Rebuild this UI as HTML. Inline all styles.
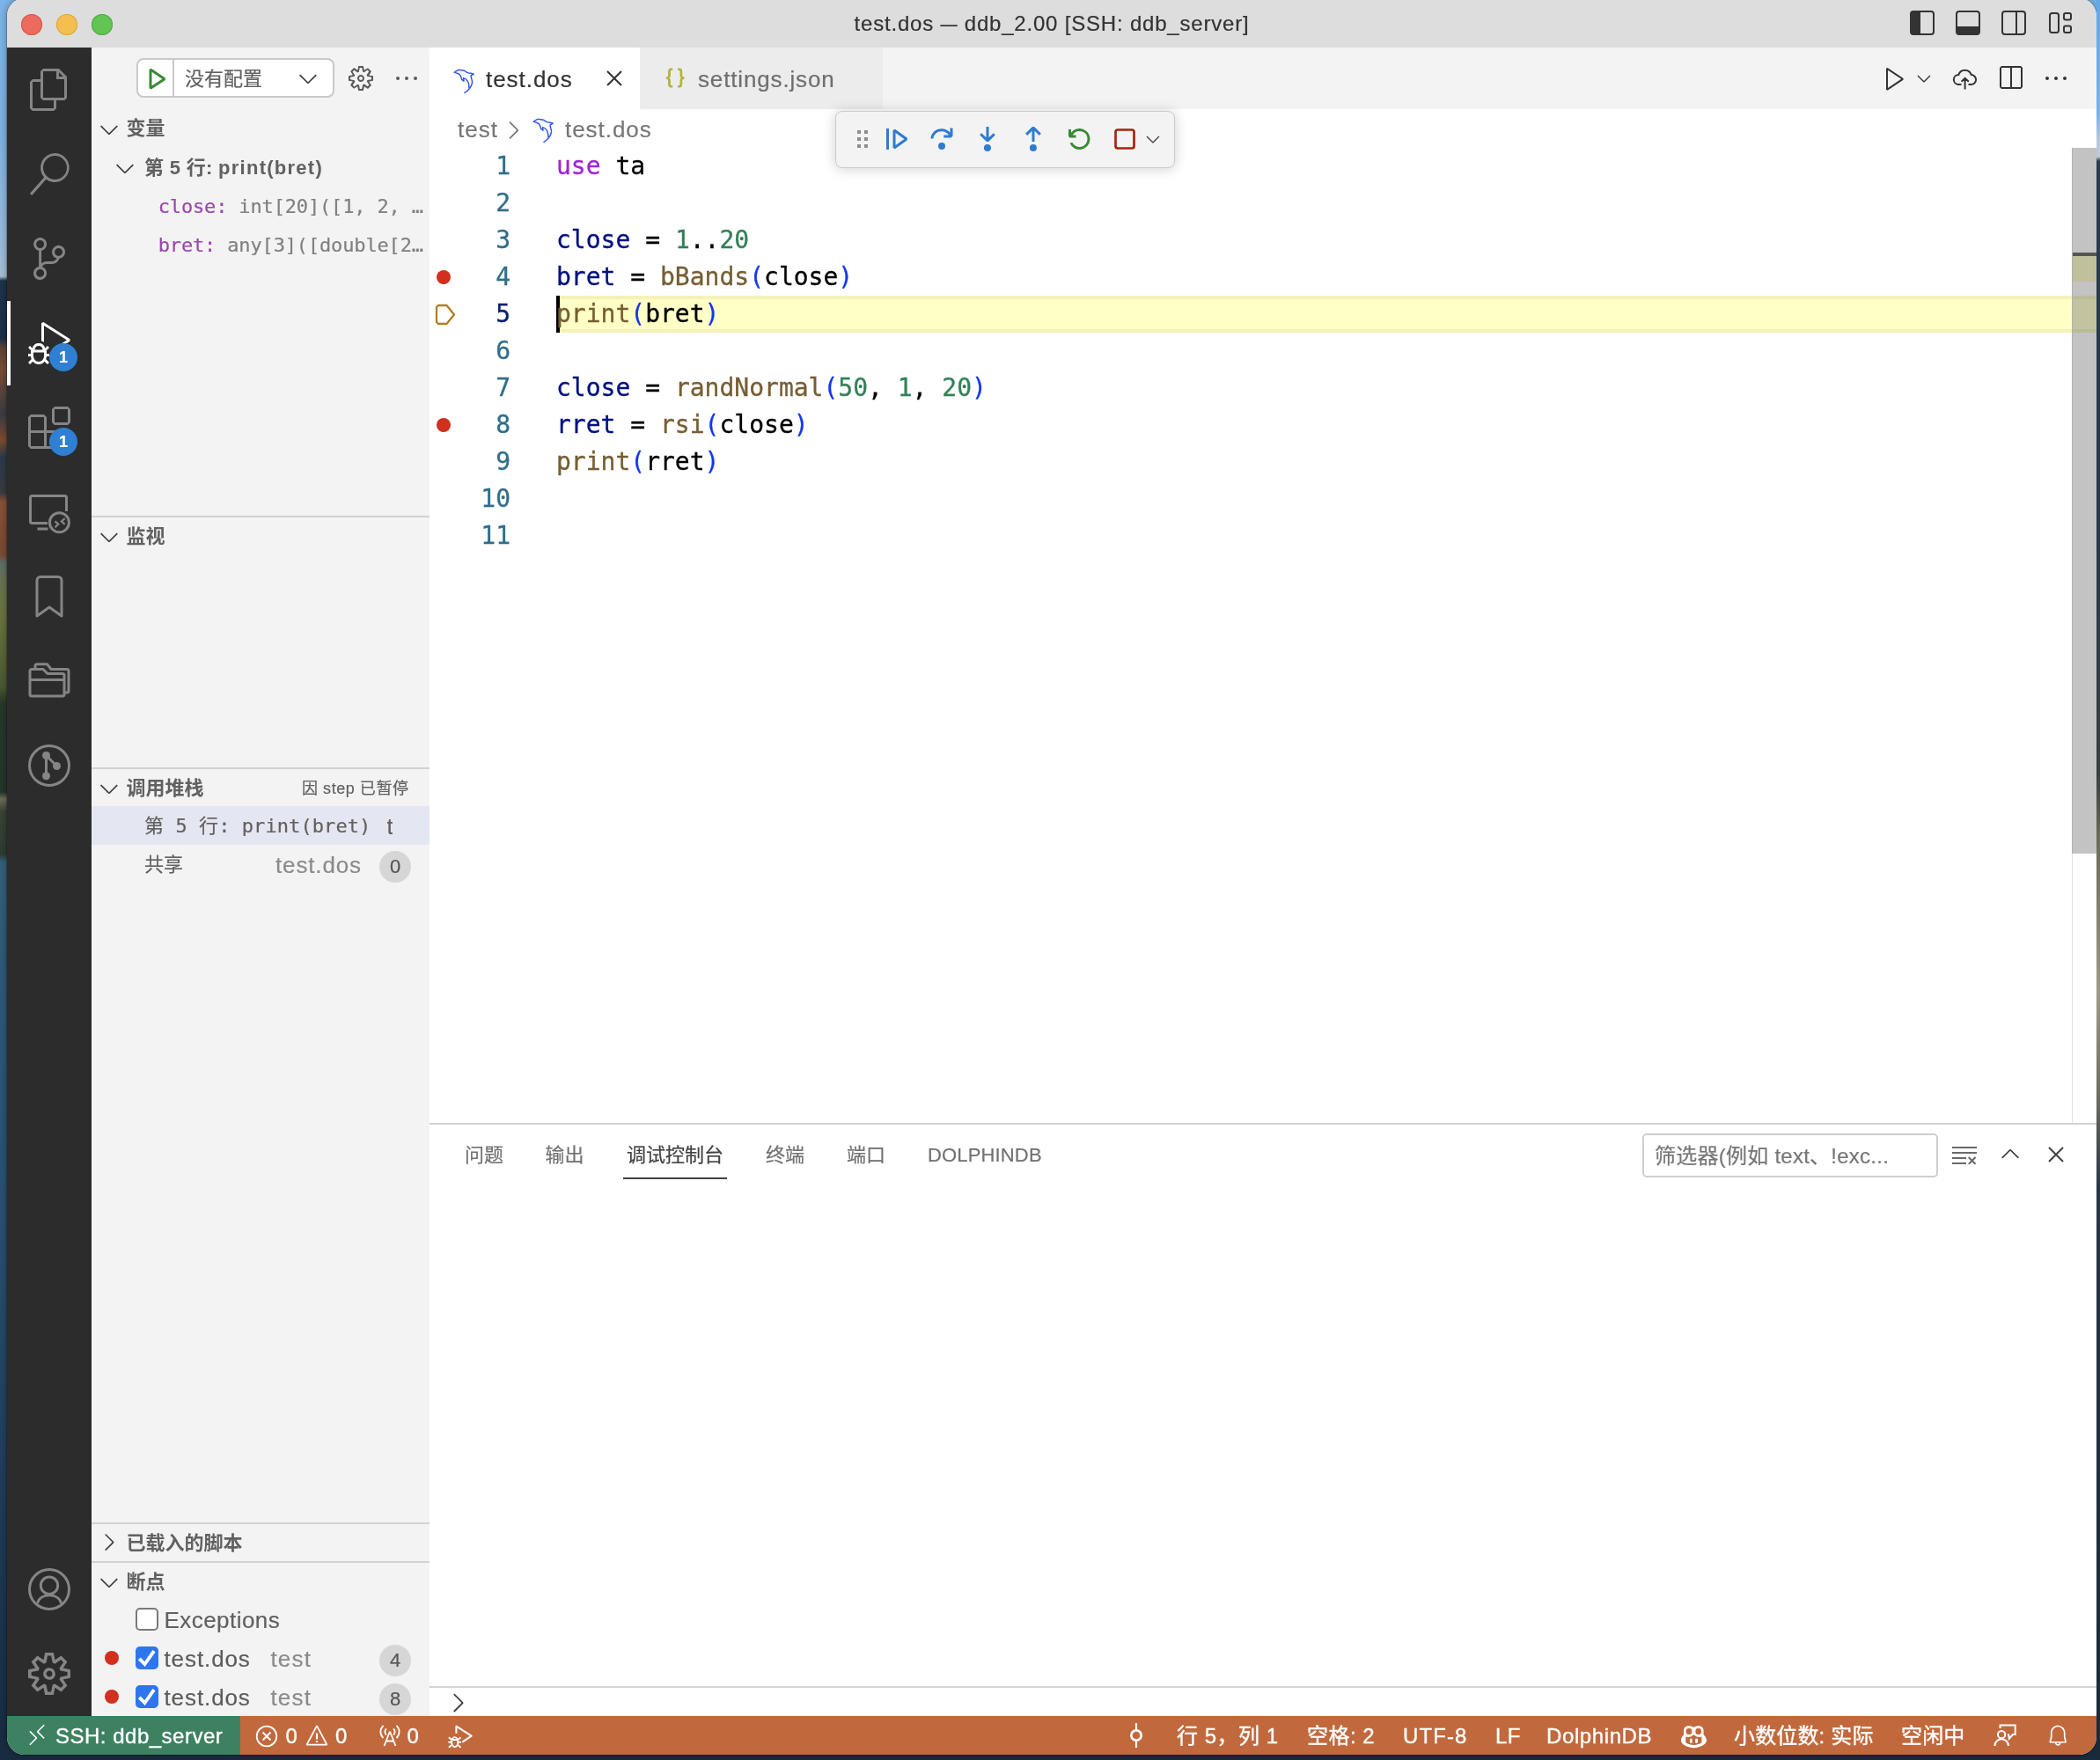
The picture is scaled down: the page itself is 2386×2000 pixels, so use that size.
<!DOCTYPE html>
<html lang="zh-CN">
<head>
<meta charset="utf-8">
<title>test.dos — ddb_2.00 [SSH: ddb_server]</title>
<style>
*{box-sizing:border-box;margin:0;padding:0}
html,body{width:2386px;height:2000px;overflow:hidden}
body{position:relative;font-family:"Liberation Sans","Noto Sans CJK SC",sans-serif;color:#333;
background:linear-gradient(180deg,#7db4e8 0px,#7fb2e2 150px,#9fbddb 290px,#aabfd2 314px,#1e3448 319px,#1c3046 385px,#5a4436 395px,#7a4e34 420px,#3a3c44 470px,#7d4c30 500px,#2a3a4c 520px,#3a3a40 560px,#8a5236 570px,#7a4a34 630px,#5f7068 640px,#6a7450 665px,#6b7440 700px,#4a5a34 780px,#25382a 800px,#22362a 900px,#6e6e5a 908px,#3a4434 922px,#2c3c34 970px,#35607a 980px,#2f5a78 1100px,#2a5070 1400px,#1f3c58 1700px,#182c40 2000px);}
.abs{position:absolute}
.mono{font-family:"DejaVu Sans Mono","Liberation Mono","Noto Sans CJK SC",monospace}
#win{will-change:transform;-webkit-text-stroke:.2px;position:absolute;left:8px;top:-2px;width:2374px;height:1996px;border-radius:20px;overflow:hidden;background:#dddddd;box-shadow:0 0 0 1px rgba(0,0,0,.2),0 0 10px rgba(0,0,0,.35)}
#sh{position:absolute;left:0;top:2px;width:2374px;height:1994px}
#title{position:absolute;left:0;top:0;width:2374px;height:54px;background:#dddddd}
#title .t{position:absolute;left:0;width:2374px;top:0;height:54px;line-height:54px;text-align:center;font-size:24px;letter-spacing:.8px;color:#333}
#title .t i{display:inline-block;font-style:normal;transform:scaleX(.8);margin:0 -2.500px}
.tl{position:absolute;top:16px;width:24px;height:24px;border-radius:50%}
#act{position:absolute;left:0;top:54px;width:96px;height:1896px;background:#2c2c2c}
#side{position:absolute;left:96px;top:54px;width:384px;height:1896px;background:#f3f3f3;color:#616161}
#ed{position:absolute;left:480px;top:54px;width:1894px;height:1896px;background:#fff}
#status{position:absolute;left:0;top:1950px;width:2374px;height:44px;background:linear-gradient(90deg,#3d8161 265px,#c1693d 265px);color:#fff;font-size:24px}
svg{position:absolute;display:block;overflow:visible}
.ic{fill:#858585}
.hdr{-webkit-text-stroke:0;position:absolute;left:0;width:384px;height:44px;font-weight:bold;font-size:22px;color:#616161}
.hdr.b{border-top:2px solid #d2d2d2}
.hdr span{position:absolute;left:39.500px;top:0;line-height:44px;white-space:nowrap}
.hdr.b span{top:-.300px}
.row{position:absolute;left:0;width:384px;height:44px;line-height:46px;white-space:nowrap;overflow:hidden}
.badge{position:absolute;width:36px;height:36px;border-radius:18px;background:#d6d6d6;color:#555;font-size:22px;line-height:36px;text-align:center}
.cb{position:absolute;left:50px;width:26px;height:26px;border-radius:5px;overflow:hidden}
.cb.off{border:2px solid #7a7a7a;background:#fff}
.cb.on{background:#2f76ee}
.bp{position:absolute;width:16px;height:16px;border-radius:50%;background:#d1301f}
.ln{position:absolute;left:0;width:92px;text-align:right;height:42px;line-height:42px;font-size:28px;color:#306e8a;-webkit-text-stroke:.3px}
.cl{position:absolute;left:144px;height:42px;line-height:42px;font-size:28px;white-space:pre;color:#000;-webkit-text-stroke:.3px}
.kw{color:#a026d4}.v{color:#001080}.n{color:#338057}.f{color:#755e32}.p{color:#1036f5}
.ptab{position:absolute;top:1222px;height:70px;line-height:74px;font-size:22px;color:#717171;white-space:nowrap}
.sb{position:absolute;top:0;height:44px;line-height:45.400px;white-space:nowrap;letter-spacing:.5px;-webkit-text-stroke:.35px #fff}
</style>
</head>
<body>
<div id="win"><div id="sh">
<!-- TITLE BAR -->
<div id="title">
<div class="tl" style="left:16px;background:#ec6a5e;box-shadow:inset 0 0 0 1px #d5574b"></div>
<div class="tl" style="left:56px;background:#f4bf4f;box-shadow:inset 0 0 0 1px #d9a53a"></div>
<div class="tl" style="left:96px;background:#61c554;box-shadow:inset 0 0 0 1px #4fa842"></div>
<div class="t">test.dos <i>—</i> ddb_2.00 [SSH: ddb_server]</div>
<svg style="left:2162px;top:12px" width="28" height="28" viewBox="0 0 28 28"><rect x="1" y="1" width="26" height="26" rx="3" fill="none" stroke="#333" stroke-width="2"/><path fill="#333" d="M1 4a3 3 0 0 1 3-3h8v26H4a3 3 0 0 1-3-3z"/></svg>
<svg style="left:2214px;top:12px" width="28" height="28" viewBox="0 0 28 28"><rect x="1" y="1" width="26" height="26" rx="3" fill="none" stroke="#333" stroke-width="2"/><path fill="#333" d="M1 18h26v6a3 3 0 0 1-3 3H4a3 3 0 0 1-3-3z"/></svg>
<svg style="left:2266px;top:12px" width="28" height="28" viewBox="0 0 28 28"><rect x="1" y="1" width="26" height="26" rx="3" fill="none" stroke="#333" stroke-width="2"/><path fill="#333" d="M16 1h2v26h-2z"/></svg>
<svg style="left:2320px;top:14px" width="26" height="24" viewBox="0 0 26 24"><rect x="1" y="1" width="10" height="22" rx="2.500" fill="none" stroke="#333" stroke-width="2"/><rect x="17" y="1" width="8" height="7.500" rx="2" fill="none" stroke="#333" stroke-width="2"/><rect x="17" y="15.500" width="8" height="7.500" rx="2" fill="none" stroke="#333" stroke-width="2"/></svg>
</div>
<!-- ACTIVITY BAR -->
<div id="act">
<div class="abs" style="left:0;top:288px;width:4px;height:96px;background:#fff"></div>
<!-- files -->
<svg style="left:24px;top:24px" width="48" height="48" viewBox="0 0 24 24"><path class="ic" d="M17.500 0h-9L7 1.500V6H2.500L1 7.500v15.070L2.500 24h12.070L16 22.570V18h4.700l1.300-1.430V4.500L17.500 0zm0 2.120l2.380 2.380H17.500V2.120zm-3 20.380h-12v-15H7v9.070L8.500 18h6v4.500zm6-6h-12v-15H16V6h4.500v10.500z"/></svg>
<!-- search -->
<svg style="left:24px;top:120px" width="48" height="48" viewBox="0 0 24 24"><path class="ic" d="M15.250 0a8.250 8.250 0 0 0-6.180 13.720L1 22.880l1.120 1.120 8.050-9.120A8.251 8.251 0 1 0 15.250.010V0zm0 15a6.750 6.750 0 1 1 0-13.500 6.750 6.750 0 0 1 0 13.500z"/></svg>
<!-- scm -->
<svg style="left:24px;top:216px" width="48" height="48" viewBox="0 0 24 24"><path class="ic" d="M21.007 8.222A3.738 3.738 0 0 0 15.045 5.200a3.737 3.737 0 0 0 1.156 6.583 2.988 2.988 0 0 1-2.668 1.670h-2.990a4.456 4.456 0 0 0-2.989 1.165V7.400a3.737 3.737 0 1 0-1.494 0v9.117a3.776 3.776 0 1 0 1.816.099 2.990 2.990 0 0 1 2.668-1.667h2.990a4.484 4.484 0 0 0 4.223-3.039 3.736 3.736 0 0 0 3.250-3.687zM4.565 3.738a2.242 2.242 0 1 1 4.484 0 2.242 2.242 0 0 1-4.484 0zm4.484 16.441a2.242 2.242 0 1 1-4.484 0 2.242 2.242 0 0 1 4.484 0zm8.221-9.715a2.242 2.242 0 1 1 0-4.485 2.242 2.242 0 0 1 0 4.485z"/></svg>
<!-- debug -->
<svg style="left:24px;top:312px" width="48" height="48" viewBox="0 0 24 24"><path fill="#fff" d="M10.940 13.500l-1.320 1.320a3.730 3.730 0 0 0-7.240 0L1.060 13.500 0 14.560l1.720 1.720-.220.220V18H0v1.500h1.500v.080c.077.489.214.966.410 1.420L0 22.940 1.060 24l1.650-1.650A4.308 4.308 0 0 0 6 24a4.310 4.310 0 0 0 3.290-1.650L10.940 24 12 22.940 10.090 21c.198-.464.336-.951.410-1.450v-.100H12V18h-1.500v-1.500l-.220-.220L12 14.560l-1.060-1.060zM6 13.500a2.250 2.250 0 0 1 2.250 2.250h-4.500A2.250 2.250 0 0 1 6 13.500zm3 6a3.330 3.330 0 0 1-3 3 3.330 3.330 0 0 1-3-3v-2.250h6v2.250zm14.760-9.900v1.260L13.500 17.370V15.600l8.500-5.370L9 2v9.460a5.070 5.070 0 0 0-1.500-.720V.630L8.640 0l15.120 9.600z"/></svg>
<div class="abs" style="left:48px;top:336px;width:32px;height:32px;border-radius:16px;background:#2f7fd2;color:#fff;font-weight:bold;font-size:18px;line-height:32px;text-align:center">1</div>
<!-- extensions -->
<svg style="left:24px;top:408px" width="48" height="48" viewBox="0 0 24 24"><path class="ic" d="M13.500 1.500L15 0h7.500L24 1.500V9l-1.500 1.500H15L13.500 9V1.500zm1.500 0V9h7.500V1.500H15zM0 15V6l1.500-1.500H9L10.500 6v7.500H18l1.500 1.500v7.500L18 24H1.500L0 22.500V15zm9-1.500V6H1.500v7.500H9zM9 15H1.500v7.500H9V15zm1.500 7.500H18V15h-7.500v7.500z"/></svg>
<div class="abs" style="left:48px;top:432px;width:32px;height:32px;border-radius:16px;background:#2f7fd2;color:#fff;font-weight:bold;font-size:18px;line-height:32px;text-align:center">1</div>
<!-- remote explorer -->
<svg style="left:16px;top:504px" width="56" height="56" viewBox="0 0 56 56"><path fill="none" stroke="#858585" stroke-width="3" d="M30 36.500H12.500a2 2 0 0 1-2-2V7.500a2 2 0 0 1 2-2H49.500a2 2 0 0 1 2 2V23M18.500 43H30.500"/><circle cx="43.400" cy="35.700" r="11" fill="none" stroke="#858585" stroke-width="3"/><path fill="none" stroke="#858585" stroke-width="2.200" d="M38.500 34.400l3.800 3.200-3.800 3.600M49.700 31.100l-3.900 3.300 3.900 3.500"/></svg>
<!-- bookmark -->
<svg style="left:24px;top:600px" width="48" height="48" viewBox="0 0 48 48"><path fill="none" stroke="#858585" stroke-width="3" stroke-linejoin="round" d="M14 1.500H34A4 4 0 0 1 38 5.500V46L24 36 10 46V5.500A4 4 0 0 1 14 1.500z"/></svg>
<!-- folders -->
<svg style="left:24px;top:696px" width="48" height="48" viewBox="0 0 48 48"><path fill="none" stroke="#858585" stroke-width="3" stroke-linejoin="round" d="M4 41a2 2 0 0 1-2-2V12.500a2 2 0 0 1 2-2H17L22 15.500H39a2 2 0 0 1 2 2V39a2 2 0 0 1-2 2zM2 22.500H41M8 9V6.700a2 2 0 0 1 2-2H21.500L26 10.500H44a2 2 0 0 1 2 2V35a2 2 0 0 1-2 2H42"/></svg>
<!-- git graph -->
<svg style="left:24px;top:792px" width="48" height="48" viewBox="0 0 48 48"><circle cx="24" cy="24" r="22.500" fill="none" stroke="#858585" stroke-width="3"/><path stroke="#858585" stroke-width="3" fill="none" d="M20.500 12.500V35.700M20.500 12.500L32.500 24.500"/><circle cx="20.500" cy="12.500" r="4.500" fill="#858585"/><circle cx="20.500" cy="35.700" r="4.500" fill="#858585"/><circle cx="32.500" cy="24.500" r="4.500" fill="#858585"/></svg>
<!-- account -->
<svg style="left:24px;top:1728px" width="48" height="48" viewBox="0 0 48 48"><circle cx="24" cy="24" r="22.500" fill="none" stroke="#858585" stroke-width="3"/><circle cx="24" cy="19.700" r="9.700" fill="none" stroke="#858585" stroke-width="3"/><path fill="none" stroke="#858585" stroke-width="3" d="M10.500 40C12 34 17.500 30.800 24 30.800S36 34 37.500 40"/></svg>
<!-- gear -->
<svg style="left:24px;top:1824px" width="48" height="48" viewBox="0 0 24 24"><path class="ic" d="M19.850 8.750l4.150.830v4.840l-4.150.830 2.350 3.520-3.430 3.430-3.520-2.350-.830 4.150H9.580l-.830-4.150-3.520 2.350-3.430-3.430 2.350-3.520L0 14.420V9.580l4.150-.830L1.800 5.230 5.230 1.800l3.520 2.350L9.580 0h4.840l.830 4.150 3.520-2.350 3.430 3.430-2.350 3.520zm-1.570 5.070l4-.810v-2l-4-.810-.540-1.300 2.290-3.430-1.430-1.430-3.430 2.290-1.300-.540-.810-4h-2l-.810 4-1.300.540-3.430-2.290-1.430 1.430L6.380 8.900l-.540 1.300-4 .810v2l4 .810.540 1.300-2.290 3.430 1.430 1.430 3.430-2.290 1.300.540.810 4h2l.810-4 1.300-.540 3.430 2.290 1.430-1.430-2.290-3.430.540-1.300zm-8.186-4.672A3.430 3.430 0 0 1 12 8.570 3.440 3.440 0 0 1 15.430 12a3.430 3.430 0 1 1-5.336-2.852zm.956 4.274c.281.188.612.288.950.288A1.700 1.700 0 0 0 13.710 12a1.710 1.710 0 1 0-2.660 1.422z"/></svg>
</div>
<!-- SIDEBAR -->
<div id="side">
<div class="abs" style="left:51px;top:12px;width:225px;height:45px;border:2px solid #c9c9c9;border-radius:8px;background:#fff"></div>
<div class="abs" style="left:92px;top:13px;width:2px;height:43px;background:#c9c9c9"></div>
<svg style="left:56.500px;top:19px" width="32" height="32" viewBox="0 0 16 16"><path fill="#388a34" d="M4.250 3l1.166-.624 8 5.333v1.248l-8 5.334-1.166-.624V3zm1.500 1.401v7.864l5.898-3.932L5.750 4.401z"/></svg>
<div class="abs" style="left:106px;top:13px;height:45px;line-height:46.500px;font-size:22px;color:#616161;white-space:nowrap">没有配置</div>
<svg style="left:229.500px;top:18.600px" width="32" height="32" viewBox="0 0 16 16"><path fill="#424242" d="M7.976 10.072l4.357-4.357.620.618L8.284 11h-.618L3 6.333l.619-.618 4.357 4.357z"/></svg>
<svg style="left:289.500px;top:19px" width="32" height="32" viewBox="0 0 16 16"><path fill="#5a5a5a" d="M9.100 4.400L8.600 2H7.400l-.500 2.400-.700.300-2-1.300-.900.800 1.300 2-.200.700-2.400.500v1.200l2.400.500.300.800-1.300 2 .800.800 2-1.300.800.300.400 2.300h1.200l.500-2.400.800-.300 2 1.300.800-.800-1.300-2 .300-.800 2.300-.400V7.400l-2.400-.500-.300-.800 1.300-2-.800-.800-2 1.300-.700-.200zM9.400 1l.500 2.400L12 2.100l2 2-1.400 2.100 2.400.400v2.800l-2.400.500L14 12l-2 2-2.100-1.400-.500 2.400H6.600l-.500-2.400L4 13.900l-2-2 1.400-2.100L1 9.400V6.600l2.400-.500L2.100 4l2-2 2.100 1.400.400-2.400h2.800zm.600 7c0 1.100-.900 2-2 2s-2-.900-2-2 .900-2 2-2 2 .900 2 2zM8 9c.600 0 1-.400 1-1s-.400-1-1-1-1 .400-1 1 .400 1 1 1z"/></svg>
<svg style="left:342px;top:19px" width="32" height="32" viewBox="0 0 16 16"><path fill="#5a5a5a" d="M4 8a1 1 0 1 1-2 0 1 1 0 0 1 2 0zm5 0a1 1 0 1 1-2 0 1 1 0 0 1 2 0zm5 0a1 1 0 1 1-2 0 1 1 0 0 1 2 0z"/></svg>

<!-- 变量 -->
<div class="hdr" style="top:70px"><svg style="left:3.500px;top:6.500px" width="32" height="32" viewBox="0 0 16 16"><path fill="#424242" d="M7.976 10.072l4.357-4.357.620.618L8.284 11h-.618L3 6.333l.619-.618 4.357 4.357z"/></svg><span>变量</span></div>
<div class="row" style="top:114px"><svg style="left:21.500px;top:6.500px" width="32" height="32" viewBox="0 0 16 16"><path fill="#424242" d="M7.976 10.072l4.357-4.357.620.618L8.284 11h-.618L3 6.333l.619-.618 4.357 4.357z"/></svg><span class="abs" style="left:60px;top:0;font-size:22px;font-weight:bold;-webkit-text-stroke:0;color:#616161;letter-spacing:.3px">第 5 行: <span style="letter-spacing:1.270px">print(bret)</span></span></div>
<div class="row mono" style="top:158px;font-size:22px"><span class="abs" style="left:75.700px;top:0;color:#808080;letter-spacing:-.15px"><span style="color:#9b46b0">close:</span> int[20]([1, 2, …</span></div>
<div class="row mono" style="top:202px;font-size:22px"><span class="abs" style="left:75.700px;top:0;color:#808080;letter-spacing:-.15px"><span style="color:#9b46b0">bret:</span> any[3]([double[2…</span></div>

<!-- 监视 -->
<div class="hdr b" style="top:532px"><svg style="left:3.500px;top:5.500px" width="32" height="32" viewBox="0 0 16 16"><path fill="#424242" d="M7.976 10.072l4.357-4.357.620.618L8.284 11h-.618L3 6.333l.619-.618 4.357 4.357z"/></svg><span>监视</span></div>

<!-- 调用堆栈 -->
<div class="hdr b" style="top:818px"><svg style="left:3.500px;top:5.500px" width="32" height="32" viewBox="0 0 16 16"><path fill="#424242" d="M7.976 10.072l4.357-4.357.620.618L8.284 11h-.618L3 6.333l.619-.618 4.357 4.357z"/></svg><span>调用堆栈</span>
<span style="left:239px;font-weight:normal;font-size:18px;letter-spacing:.55px;-webkit-text-stroke:.2px">因 step 已暂停</span></div>
<div class="row mono" style="top:862px;background:#e4e6f1;font-size:22px"><span class="abs" style="left:60px;top:.300px;color:#616161;letter-spacing:.08px">第 5 行: print(bret)</span><span class="abs" style="left:335.500px;top:0;width:6.500px;overflow:hidden;color:#616161;font-family:'Liberation Sans',sans-serif;font-size:26px">t</span></div>
<div class="row" style="top:906px"><span class="abs" style="left:60px;top:0;font-size:22px;color:#616161">共享</span><span class="abs" style="left:209px;top:0;font-size:26px;color:#8b8b8b;letter-spacing:.85px">test.dos</span><div class="badge" style="left:327px;top:7px">0</div></div>

<!-- 已载入的脚本 -->
<div class="hdr b" style="top:1676px"><svg style="left:4px;top:5px" width="31" height="31" viewBox="0 0 16 16"><path fill="#424242" d="M10.072 8.024L5.715 3.667l.618-.620L11 7.716v.618L6.333 13l-.618-.619 4.357-4.357z"/></svg><span>已载入的脚本</span></div>
<!-- 断点 -->
<div class="hdr b" style="top:1720px"><svg style="left:3.500px;top:5.500px" width="32" height="32" viewBox="0 0 16 16"><path fill="#424242" d="M7.976 10.072l4.357-4.357.620.618L8.284 11h-.618L3 6.333l.619-.618 4.357 4.357z"/></svg><span>断点</span></div>
<div class="row" style="top:1764px"><div class="cb off" style="top:9px"></div><span class="abs" style="left:82.500px;top:0;font-size:26px;color:#616161;letter-spacing:.45px">Exceptions</span></div>
<div class="row" style="top:1808px"><div class="bp" style="left:15px;top:14px"></div><div class="cb on" style="top:9px"><svg style="left:2px;top:2px" width="22" height="22" viewBox="0 0 22 22"><path fill="none" stroke="#fff" stroke-width="3.800" d="M2.300 11.800L8.500 18 19 3.200"/></svg></div><span class="abs" style="left:82.500px;top:0;font-size:26px;color:#5c5c5c;letter-spacing:.9px">test.dos</span><span class="abs" style="left:203.500px;top:0;font-size:26px;color:#8b8b8b;letter-spacing:1.150px">test</span><div class="badge" style="left:327px;top:7px">4</div></div>
<div class="row" style="top:1852px"><div class="bp" style="left:15px;top:14px"></div><div class="cb on" style="top:9px"><svg style="left:2px;top:2px" width="22" height="22" viewBox="0 0 22 22"><path fill="none" stroke="#fff" stroke-width="3.800" d="M2.300 11.800L8.500 18 19 3.200"/></svg></div><span class="abs" style="left:82.500px;top:0;font-size:26px;color:#5c5c5c;letter-spacing:.9px">test.dos</span><span class="abs" style="left:203.500px;top:0;font-size:26px;color:#8b8b8b;letter-spacing:1.150px">test</span><div class="badge" style="left:327px;top:7px">8</div></div>
</div>
<!-- EDITOR -->
<div id="ed">
<div class="abs" style="left:0;top:0;width:1894px;height:70px;background:#f3f3f3"></div>
<div class="abs" style="left:0;top:0;width:239px;height:70px;background:#fff"></div>
<div class="abs" style="left:239px;top:0;width:276px;height:70px;background:#ececec"></div>
<svg class="dol" style="left:27px;top:25px" width="25" height="28" viewBox="0 0 25 28"><path fill="none" stroke="#3358e6" stroke-width="1.500" stroke-linejoin="round" stroke-linecap="round" d="M1.200 3.200C3 2 4.500.800 6 .500 9 0 11 1 13.400 1.700 14.500 2.800 15.500 3.300 16.300 3.600 18 4.300 19.500 4.300 21 4.400 22 4.400 22.800 4.900 23.200 5.400 22 6 20.800 6.200 20.100 6.800 20 8.500 20.600 10 21 11.300 21.400 12.500 21.600 13.800 21.500 14.900 21.300 16.500 20.800 18 20.100 19.200 19.300 20.600 18.400 21.800 17.400 22.700 16 24.200 14.500 25.400 12.900 26.300M17.900 20.800C18 19 17.900 17.500 17.400 16 17.100 15 16.800 14 16.300 13.200 15.700 12.300 15 11.600 14.300 11 13.500 10.300 12.500 9.900 11.500 9.600L12 13.200 9.600 11.300C9.200 10 8.900 8.800 8.600 7.700 8.100 6.700 7.500 5.900 6.700 5.300 5.700 4.500 4.500 4.100 3.400 3.900L1.200 3.200"/></svg>
<div class="abs" style="left:64px;top:0;height:70px;line-height:72.500px;font-size:26px;color:#333;letter-spacing:.95px;white-space:nowrap">test.dos</div>
<svg style="left:194px;top:19px" width="32" height="32" viewBox="0 0 16 16"><path fill="#333" d="M8 8.707l3.646 3.647.708-.707L8.707 8l3.647-3.646-.707-.708L8 7.293 4.354 3.646l-.707.708L7.293 8l-3.646 3.646.707.708L8 8.707z"/></svg>
<div class="abs" style="left:268.900px;top:0;height:70px;line-height:67.500px;font-size:21.500px;color:#b3b240;letter-spacing:6.300px;-webkit-text-stroke:.9px #b3b240;white-space:nowrap">{}</div>
<div class="abs" style="left:305px;top:0;height:70px;line-height:72px;font-size:26px;color:#6f6f6f;letter-spacing:.85px;white-space:nowrap">settings.json</div>
<!-- editor actions -->
<svg style="left:1649px;top:18.600px" width="32" height="32" viewBox="0 0 16 16"><path fill="#333" d="M3.780 2L3 2.410v12l.780.420 9-6V8l-9-6zM4 13.480V3.350l7.600 5.070L4 13.480z"/></svg>
<svg style="left:1686px;top:23.400px" width="24" height="24" viewBox="0 0 16 16"><path fill="#333" d="M7.976 10.072l4.357-4.357.620.618L8.284 11h-.618L3 6.333l.619-.618 4.357 4.357z"/></svg>
<svg style="left:1728px;top:19px" width="32" height="32" viewBox="0 0 32 32"><path fill="none" stroke="#333" stroke-width="2" d="M12.500 23H8.500A5.500 5.500 0 0 1 9.300 12.060A7.500 7.500 0 0 1 23.700 12A5.500 5.500 0 0 1 23.500 23H20.500M16.600 28.500V15.800M12.600 19.800L16.600 15.800 20.800 19.800"/></svg>
<svg style="left:1780px;top:19px" width="32" height="32" viewBox="0 0 16 16"><path fill="#333" d="M14 1H3L2 2v11l1 1h11l1-1V2l-1-1zM8 13H3V2h5v11zm6 0H9V2h5v11z"/></svg>
<svg style="left:1832px;top:18.800px" width="32" height="32" viewBox="0 0 16 16"><path fill="#333" d="M4 8a1 1 0 1 1-2 0 1 1 0 0 1 2 0zm5 0a1 1 0 1 1-2 0 1 1 0 0 1 2 0zm5 0a1 1 0 1 1-2 0 1 1 0 0 1 2 0z"/></svg>
<!-- breadcrumb -->
<div class="abs" style="left:32px;top:70px;height:44px;line-height:46px;font-size:26px;color:#777;letter-spacing:1px;white-space:nowrap">test</div>
<svg style="left:78.600px;top:77.500px" width="32" height="32" viewBox="0 0 16 16"><path fill="#777" d="M10.072 8.024L5.715 3.667l.618-.620L11 7.716v.618L6.333 13l-.618-.619 4.357-4.357z"/></svg>
<svg class="dol" style="left:117px;top:81px" width="25" height="28" viewBox="0 0 25 28"><path fill="none" stroke="#3358e6" stroke-width="1.500" stroke-linejoin="round" stroke-linecap="round" d="M1.200 3.200C3 2 4.500.800 6 .500 9 0 11 1 13.400 1.700 14.500 2.800 15.500 3.300 16.300 3.600 18 4.300 19.500 4.300 21 4.400 22 4.400 22.800 4.900 23.200 5.400 22 6 20.800 6.200 20.100 6.800 20 8.500 20.600 10 21 11.300 21.400 12.500 21.600 13.800 21.500 14.900 21.300 16.500 20.800 18 20.100 19.200 19.300 20.600 18.400 21.800 17.400 22.700 16 24.200 14.500 25.400 12.900 26.300M17.900 20.800C18 19 17.900 17.500 17.400 16 17.100 15 16.800 14 16.300 13.200 15.700 12.300 15 11.600 14.300 11 13.500 10.300 12.500 9.900 11.500 9.600L12 13.200 9.600 11.300C9.200 10 8.900 8.800 8.600 7.700 8.100 6.700 7.500 5.900 6.700 5.300 5.700 4.500 4.500 4.100 3.400 3.900L1.200 3.200"/></svg>
<div class="abs" style="left:154px;top:70px;height:44px;line-height:46px;font-size:26px;color:#777;letter-spacing:.95px;white-space:nowrap">test.dos</div>
<!-- lines -->
<div class="abs" style="left:144px;top:282px;width:1750px;height:42px;background:#ffffc6;border-top:4px solid #f4f2b8;border-bottom:4px solid #f4f2b8"></div>
<div class="abs" style="left:143.700px;top:282px;width:4px;height:42px;background:#000"></div>
<div class="mono">
<div class="ln" style="top:114px">1</div><div class="cl" style="top:114px"><span class="kw">use</span> ta</div>
<div class="ln" style="top:156px">2</div>
<div class="ln" style="top:198px">3</div><div class="cl" style="top:198px"><span class="v">close</span> = <span class="n">1</span>..<span class="n">20</span></div>
<div class="ln" style="top:240px">4</div><div class="cl" style="top:240px"><span class="v">bret</span> = <span class="f">bBands</span><span class="p">(</span>close<span class="p">)</span></div>
<div class="ln" style="top:282px;color:#0b216f">5</div><div class="cl" style="top:282px"><span class="f">print</span><span class="p">(</span>bret<span class="p">)</span></div>
<div class="ln" style="top:324px">6</div>
<div class="ln" style="top:366px">7</div><div class="cl" style="top:366px"><span class="v">close</span> = <span class="f">randNormal</span><span class="p">(</span><span class="n">50</span>, <span class="n">1</span>, <span class="n">20</span><span class="p">)</span></div>
<div class="ln" style="top:408px">8</div><div class="cl" style="top:408px"><span class="v">rret</span> = <span class="f">rsi</span><span class="p">(</span>close<span class="p">)</span></div>
<div class="ln" style="top:450px">9</div><div class="cl" style="top:450px"><span class="f">print</span><span class="p">(</span>rret<span class="p">)</span></div>
<div class="ln" style="top:492px">10</div>
<div class="ln" style="top:534px">11</div>
</div>
<div class="bp" style="left:8px;top:253px"></div>
<div class="bp" style="left:8px;top:421px"></div>
<svg style="left:6px;top:290.500px" width="24" height="25" viewBox="0 0 24 25"><path fill="none" stroke="#b08020" stroke-width="2.300" stroke-linejoin="round" d="M4 2H13.500L22 12.500 13.500 23H4L2 21V4z"/></svg>
<!-- scrollbar -->
<div class="abs" style="left:1866px;top:114px;width:1px;height:1108px;background:#e2e2e2"></div>
<div class="abs" style="left:1866px;top:114px;width:28px;height:802px;background:rgba(100,100,100,.39)"></div>
<div class="abs" style="left:1867px;top:233px;width:27px;height:4px;background:#56564f"></div>
<div class="abs" style="left:1867px;top:237px;width:27px;height:29px;background:#c0c09c"></div>
<!-- debug toolbar -->
<div class="abs" style="left:461.400px;top:71.600px;width:385.600px;height:65px;background:#f3f3f3;border:1px solid #cbcbcb;border-radius:8px;box-shadow:0 1px 14px 1px rgba(0,0,0,.17)"></div>
<svg style="left:486px;top:94px" width="12" height="20" viewBox="0 0 12 20"><path fill="#8e8e8e" d="M0 0h4v4H0zM8 0h4v4H8zM0 8h4v4H0zM8 8h4v4H8zM0 16h4v4H0zM8 16h4v4H8z"/></svg>
<svg style="left:514px;top:88px" width="32" height="32" viewBox="0 0 16 16"><path fill="#2f7bd0" d="M2.500 2H4v12H2.500V2zm4.936.390L6.250 3v10l1.186.610 7-5V7.390l-7-5zM12.710 8l-4.960 3.543V4.457L12.710 8z"/></svg>
<svg style="left:566px;top:88px" width="32" height="32" viewBox="0 0 16 16"><path fill="#2f7bd0" d="M14.250 5.750v-4h-1.500v2.542c-1.145-1.359-2.911-2.209-4.840-2.209-3.177 0-5.920 2.307-6.160 5.398l-.020.269h1.501l.022-.226c.212-2.195 2.202-3.940 4.656-3.940 1.736 0 3.244.875 4.050 2.166h-2.830v1.500h4.163l.962-.975V5.750h-.004zM8 14a2 2 0 1 0 0-4 2 2 0 0 0 0 4z"/></svg>
<svg style="left:618px;top:88.400px" width="32" height="32" viewBox="0 0 16 16"><path fill="#2f7bd0" d="M8 9.532h.542l3.905-3.905-1.061-1.060-2.637 2.610V1H7.251v6.177l-2.637-2.610-1.061 1.060 3.905 3.905H8zm1.956 3.481a2 2 0 1 1-4 0 2 2 0 0 1 4 0z"/></svg>
<svg style="left:670px;top:88.400px" width="32" height="32" viewBox="0 0 16 16"><path fill="#2f7bd0" d="M8 1h-.542L3.553 4.905l1.061 1.060 2.637-2.610v6.177h1.498V3.355l2.637 2.610 1.061-1.060L8.542 1H8zm1.956 12.013a2 2 0 1 1-4 0 2 2 0 0 1 4 0z"/></svg>
<svg style="left:722px;top:88px" width="32" height="32" viewBox="0 0 16 16"><path fill="#388a34" d="M12.750 8a4.500 4.500 0 0 1-8.610 1.834l-1.391.565A6.001 6.001 0 0 0 14.250 8 6 6 0 0 0 3.500 4.334V2.500H2v4l.750.750h3.500v-1.500H4.352A4.500 4.500 0 0 1 12.750 8z"/></svg>
<svg style="left:774.400px;top:88px" width="32" height="32" viewBox="0 0 32 32"><rect x="5.500" y="5.500" width="21" height="21" rx="2.500" fill="none" stroke="#a1260d" stroke-width="2.700"/></svg>
<svg style="left:809.900px;top:92.400px" width="24" height="24" viewBox="0 0 16 16"><path fill="#424242" d="M7.976 10.072l4.357-4.357.620.618L8.284 11h-.618L3 6.333l.619-.618 4.357 4.357z"/></svg>

<!-- PANEL -->
<div class="abs" style="left:0;top:1222px;width:1894px;height:2px;background:#d3d3d3"></div>
<div class="ptab" style="left:40px">问题</div>
<div class="ptab" style="left:131.500px">输出</div>
<div class="ptab" style="left:224px;color:#424242">调试控制台</div>
<div class="abs" style="left:219.800px;top:1284px;width:118.200px;height:2px;background:#424242"></div>
<div class="ptab" style="left:382px">终端</div>
<div class="ptab" style="left:474px">端口</div>
<div class="ptab" style="left:566px;letter-spacing:.15px">DOLPHINDB</div>
<div class="abs" style="left:1377.500px;top:1233.600px;width:336px;height:50.700px;border:2px solid #cecece;border-radius:5px;background:#fff"></div>
<div class="abs" style="left:1392px;top:1234.600px;height:48.700px;line-height:50px;font-size:24px;color:#767676;white-space:nowrap;letter-spacing:.25px">筛选器(例如 text、!exc...</div>
<svg style="left:1728px;top:1243px" width="32" height="32" viewBox="0 0 16 16"><path fill="#6a6a6a" d="M10 12.600l.700.700 1.600-1.600 1.600 1.600.800-.700L13 11l1.700-1.600-.800-.800-1.600 1.700-1.600-1.700-.700.800 1.600 1.600-1.600 1.600zM1 4h14V3H1v1zm0 3h14V6H1v1zm8 2.500V9H1v1h8v-.500zM9 13v-1H1v1h8z"/></svg>
<svg style="left:1780px;top:1241.500px" width="32" height="32" viewBox="0 0 16 16"><path fill="#424242" d="M8.024 5.928l-4.357 4.357-.620-.618L7.716 5h.618L13 9.667l-.619.618-4.357-4.357z"/></svg>
<svg style="left:1832px;top:1242.400px" width="32" height="32" viewBox="0 0 16 16"><path fill="#424242" d="M8 8.707l3.646 3.647.708-.707L8.707 8l3.647-3.646-.707-.708L8 7.293 4.354 3.646l-.707.708L7.293 8l-3.646 3.646.707.708L8 8.707z"/></svg>
<div class="abs" style="left:0;top:1862px;width:1894px;height:2px;background:#d3d3d3"></div>
<svg style="left:15.200px;top:1864px" width="34" height="34" viewBox="0 0 16 16"><path fill="#424242" d="M10.072 8.024L5.715 3.667l.618-.620L11 7.716v.618L6.333 13l-.618-.619 4.357-4.357z"/></svg>
</div>
<!-- STATUS BAR -->
<div id="status">
<svg style="left:19.900px;top:8.300px" width="28.200" height="28.200" viewBox="0 0 16 16"><path fill="#fff" d="M12.904 9.570L8.928 5.596l3.976-3.976-.619-.620L8 5.286v.619l4.285 4.285.620-.618zM3 5.620l4.072 4.070L3 13.763l.619.618L8 10v-.619L3.619 5 3 5.620z"/></svg>
<div class="sb" style="left:55px;">SSH: ddb_server</div>
<svg style="left:281.250px;top:8.700px" width="28" height="28" viewBox="0 0 28 28"><circle cx="14" cy="14" r="11.300" fill="none" stroke="#fff" stroke-width="1.800"/><path stroke="#fff" stroke-width="1.800" fill="none" d="M9.500 9.500l9 9M18.500 9.500l-9 9"/></svg>
<div class="sb" style="left:316.500px">0</div>
<svg style="left:338px;top:8.700px" width="28" height="28" viewBox="0 0 16 16"><path fill="#fff" d="M7.560 1h.880l6.540 12.260-.440.740H1.440L1 13.260 7.560 1zM8 2.280L2.280 13H13.700L8 2.280zM8.625 12v-1h-1.250v1h1.250zm-1.250-2V6h1.250v4h-1.250z"/></svg>
<div class="sb" style="left:373px">0</div>
<svg style="left:423px;top:8px" width="24" height="28" viewBox="0 0 24 28"><path fill="none" stroke="#fff" stroke-width="1.800" d="M12 9.500L5.500 26M12 9.500L18.500 26M8 20.500H16M8 6.500A4.500 4.500 0 0 0 8 13.500M16 6.500A4.500 4.500 0 0 1 16 13.500M4.500 3A9.500 9.500 0 0 0 4.500 17M19.500 3A9.500 9.500 0 0 1 19.500 17"/></svg>
<div class="sb" style="left:454.500px">0</div>
<svg style="left:500px;top:8px" width="30" height="30" viewBox="0 0 30 30"><path fill="none" stroke="#fff" stroke-width="2" stroke-linejoin="round" d="M10.400 11.700V3.700L27.700 14.600 17.300 21.700"/><ellipse cx="8.700" cy="21.600" rx="3.500" ry="5.500" fill="none" stroke="#fff" stroke-width="1.900"/><path fill="none" stroke="#fff" stroke-width="1.900" d="M5.200 19h7M1.900 16.300l3 2.400M1.400 21.800h3.800M1.900 27.700l3.200-2.700M15.500 16.300l-3 2.400M16 21.800h-3.800M15.500 27.700l-3.200-2.700"/></svg>
<svg style="left:1275.100px;top:8px" width="16" height="28" viewBox="0 0 16 28"><circle cx="8" cy="14" r="5.700" fill="none" stroke="#fff" stroke-width="2.700"/><path stroke="#fff" stroke-width="2.100" d="M8 .100V8.500M8 19.500V28.100"/></svg>
<div class="sb" style="left:1329px">行 5，列 1</div>
<div class="sb" style="left:1477px">空格: 2</div>
<div class="sb" style="left:1586px;letter-spacing:1.100px">UTF-8</div>
<div class="sb" style="left:1691px">LF</div>
<div class="sb" style="left:1749px;letter-spacing:.6px">DolphinDB</div>
<svg style="left:1901px;top:11px" width="31" height="26" viewBox="0 0 31 26"><path fill="#fff" d="M9.500.200C12 .200 14 .800 15.300 2 16.600.800 18.600.200 21.100.200 24.500.200 26.600 2.500 26.600 6V10.500C28.800 12 30 14.500 30 17 30 19 28 21.300 25 22.800 22 24.400 18.500 25.300 15.400 25.300 12.300 25.300 8.800 24.400 5.800 22.800 2.800 21.300.900 19 .900 17 .900 14.500 2 12 4 10.500V6C4 2.500 6.100.200 9.500.200z"/><rect x="6.600" y="3" width="6.800" height="7.100" rx="3" fill="#c1693d"/><rect x="17.400" y="3" width="6.600" height="7.100" rx="3" fill="#c1693d"/><path fill="#c1693d" d="M6.300 12.500C9.500 13.600 13.200 12.600 15.400 10.300 17.600 12.600 21.300 13.600 24.400 12.500V19.200C21.800 20.900 18.600 21.900 15.400 21.900 12.200 21.900 9 20.900 6.300 19.200z"/><rect x="10.900" y="14.400" width="2.800" height="5.500" rx="1.400" fill="#fff"/><rect x="17.100" y="14.400" width="2.900" height="5.500" rx="1.400" fill="#fff"/></svg>
<div class="sb" style="left:1962px;letter-spacing:.15px">小数位数: 实际</div>
<div class="sb" style="left:2152px;letter-spacing:.15px">空闲中</div>
<svg style="left:2256px;top:8px" width="28" height="28" viewBox="0 0 28 28"><path fill="none" stroke="#fff" stroke-width="2" d="M8.600 6V2.400H25.700V13.100H22.900L18.900 17.700 18 13.300H17.100"/><circle cx="10.100" cy="13.100" r="4.200" fill="none" stroke="#fff" stroke-width="2"/><path fill="none" stroke="#fff" stroke-width="2" d="M2.400 26A7.800 7.800 0 0 1 18 26"/></svg>
<svg style="left:2316.700px;top:8.800px" width="26.500" height="26.500" viewBox="0 0 16 16"><path fill="#fff" d="M13.377 10.573a7.630 7.630 0 0 1-.383-2.380V6.195a5.115 5.115 0 0 0-1.268-3.446 5.138 5.138 0 0 0-3.242-1.722c-.694-.072-1.400 0-2.070.227-.670.215-1.280.574-1.794 1.053a4.923 4.923 0 0 0-1.208 1.675 5.067 5.067 0 0 0-.431 2.022v2.200a7.610 7.610 0 0 1-.383 2.370L2 12.343l.479.658h3.505c0 .526.215 1.040.586 1.412.370.370.885.586 1.412.586.526 0 1.040-.215 1.411-.586s.587-.886.587-1.412h3.505l.478-.658-.586-1.770zm-4.690 3.147a.997.997 0 0 1-.705.299.997.997 0 0 1-.706-.300.997.997 0 0 1-.300-.705h1.999a.939.939 0 0 1-.287.706zm-5.515-1.710l.371-1.114a8.633 8.633 0 0 0 .443-2.691V6.004c0-.563.120-1.113.347-1.616.227-.514.550-.969.969-1.340.419-.382.910-.670 1.436-.837.538-.180 1.100-.240 1.650-.180a4.147 4.147 0 0 1 2.597 1.400 4.133 4.133 0 0 1 1.004 2.776v2.010c0 .909.144 1.818.443 2.691l.371 1.113h-9.630v-.012z"/></svg>
</div>
</div></div>
<div class="abs" style="left:2382px;top:0;width:4px;height:2000px;background:linear-gradient(180deg,#62a8ea 0,#7ab2e6 130px,#b8c8dc 160px,#c0c8d4 178px,#2c3c50 183px,#2a384a 600px,#3a4040 880px,#6a6a5a 950px,#a09a88 1130px,#6a6a60 1250px,#2a3644 1350px,#1a2a38 2000px)"></div>
</body>
</html>
